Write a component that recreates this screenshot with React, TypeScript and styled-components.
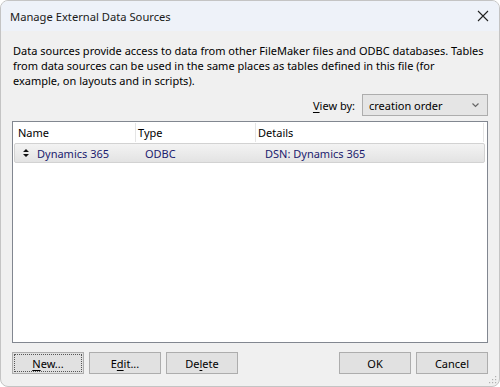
import React from "react";
import styled, { createGlobalStyle } from "styled-components";

const Global = createGlobalStyle`
  html, body { margin: 0; padding: 0; background: #ffffff; }
  body { font-family: "Noto Sans", "Open Sans", sans-serif; font-size: 11px; color: #000; }
  * { box-sizing: border-box; }
`;

const Window = styled.div`
  width: 500px;
  height: 387px;
  border: 1px solid #c4c4c4;
  border-radius: 8px;
  overflow: hidden;
  display: flex;
  flex-direction: column;
  background: #f0f0f0;
  position: relative;
`;

const TitleBar = styled.div`
  height: 30px;
  flex: none;
  background: #eef2f9;
  display: flex;
  align-items: center;
  justify-content: space-between;
  padding: 0 10px 0 9px;
`;

const Title = styled.span`
  font-size: 11.2px;
  color: #1a1a1a;
`;

const Close = styled.svg`
  width: 12px;
  height: 12px;
`;

const Body = styled.div`
  flex: 1;
  display: flex;
  flex-direction: column;
  padding: 12px 11px 12px 11px;
`;

const Description = styled.p`
  margin: 0 0 0 1px;
  line-height: 15px;
  white-space: nowrap;
`;

const ViewRow = styled.div`
  display: flex;
  justify-content: flex-end;
  align-items: center;
  gap: 7px;
  margin-top: 6px;
`;

const Label = styled.span``;

const U = styled.span`
  text-decoration: underline;
  text-underline-offset: 2px;
`;

const Select = styled.div`
  width: 126px;
  height: 22px;
  border: 1px solid #adadad;
  background: #e5e5e5;
  display: flex;
  align-items: center;
  justify-content: space-between;
  padding: 0 8px 0 6px;
`;

const List = styled.div`
  margin-top: 5px;
  height: 222px;
  border: 1px solid #828790;
  background: #ffffff;
  padding: 1px;
  display: flex;
  flex-direction: column;
`;

const Header = styled.div`
  display: grid;
  grid-template-columns: 122px 120px 228px;
  height: 19px;
`;

const HeaderCell = styled.div<{ $pad: number }>`
  border-right: 1px solid #e5e5e5;
  padding-left: ${(p) => p.$pad}px;
  display: flex;
  align-items: center;
`;

const Row = styled.div`
  display: grid;
  grid-template-columns: 122px 120px 1fr;
  height: 20px;
  margin: 1px 1px 0 0;
  border: 1px solid #d2d2d2;
  border-radius: 2px;
  background: linear-gradient(#f3f3f3, #e3e3e3);
  color: #1b1b6e;
  align-items: center;
`;

const Cell = styled.div<{ $pad: number }>`
  padding-left: ${(p) => p.$pad}px;
  display: flex;
  align-items: center;
  gap: 8px;
`;

const Sort = styled.svg`
  width: 6px;
  height: 8px;
`;

const Buttons = styled.div`
  margin-top: 9px;
  display: flex;
  gap: 5px;
`;

const Spacer = styled.div`
  flex: 1;
`;

const Button = styled.button<{ $focus?: boolean }>`
  width: 72px;
  height: 22px;
  border: 1px solid #adadad;
  background: #e1e1e1;
  font: inherit;
  color: #000;
  padding: 0;
  position: relative;
  &::after {
    content: "";
    display: ${(p) => (p.$focus ? "block" : "none")};
    position: absolute;
    inset: 1px;
    border: 1px dotted #555;
  }
`;

const Grip = styled.svg`
  position: absolute;
  right: 2px;
  bottom: 2px;
  width: 10px;
  height: 10px;
`;

export default function App() {
  return (
    <>
      <Global />
      <Window>
        <TitleBar>
          <Title>Manage External Data Sources</Title>
          <Close viewBox="0 0 12 12">
            <path d="M1 1 L11 11 M11 1 L1 11" stroke="#222" strokeWidth="1.1" />
          </Close>
        </TitleBar>
        <Body>
          <Description>
            Data sources provide access to data from other FileMaker files and ODBC databases. Tables
            <br />
            from data sources can be used in the same places as tables defined in this file (for
            <br />
            example, on layouts and in scripts).
          </Description>
          <ViewRow>
            <Label>
              <U>V</U>iew by:
            </Label>
            <Select>
              <span>creation order</span>
              <svg width="7" height="5" viewBox="0 0 7 5">
                <path d="M0.5 0.5 L3.5 3.5 L6.5 0.5" stroke="#666" fill="none" strokeWidth="1.2" />
              </svg>
            </Select>
          </ViewRow>
          <List>
            <Header>
              <HeaderCell $pad={4}>Name</HeaderCell>
              <HeaderCell $pad={2}>Type</HeaderCell>
              <HeaderCell $pad={2}>Details</HeaderCell>
            </Header>
            <Row>
              <Cell $pad={8}>
                <Sort viewBox="0 0 6 8">
                  <path d="M3 0 L6 3 L0 3 Z M0 5 L6 5 L3 8 Z" fill="#111" />
                </Sort>
                Dynamics 365
              </Cell>
              <Cell $pad={8}>ODBC</Cell>
              <Cell $pad={8}>DSN: Dynamics 365</Cell>
            </Row>
          </List>
          <Buttons>
            <Button $focus>
              <U>N</U>ew...
            </Button>
            <Button>
              E<U>d</U>it...
            </Button>
            <Button>
              De<U>l</U>ete
            </Button>
            <Spacer />
            <Button>OK</Button>
            <Button>Cancel</Button>
          </Buttons>
        </Body>
        <Grip viewBox="0 0 10 10">
          {[
            [8, 2],
            [8, 5],
            [5, 5],
            [8, 8],
            [5, 8],
            [2, 8],
          ].map(([x, y], i) => (
            <rect key={i} x={x} y={y} width="1.2" height="1.2" fill="#b0b0b0" />
          ))}
        </Grip>
      </Window>
    </>
  );
}
